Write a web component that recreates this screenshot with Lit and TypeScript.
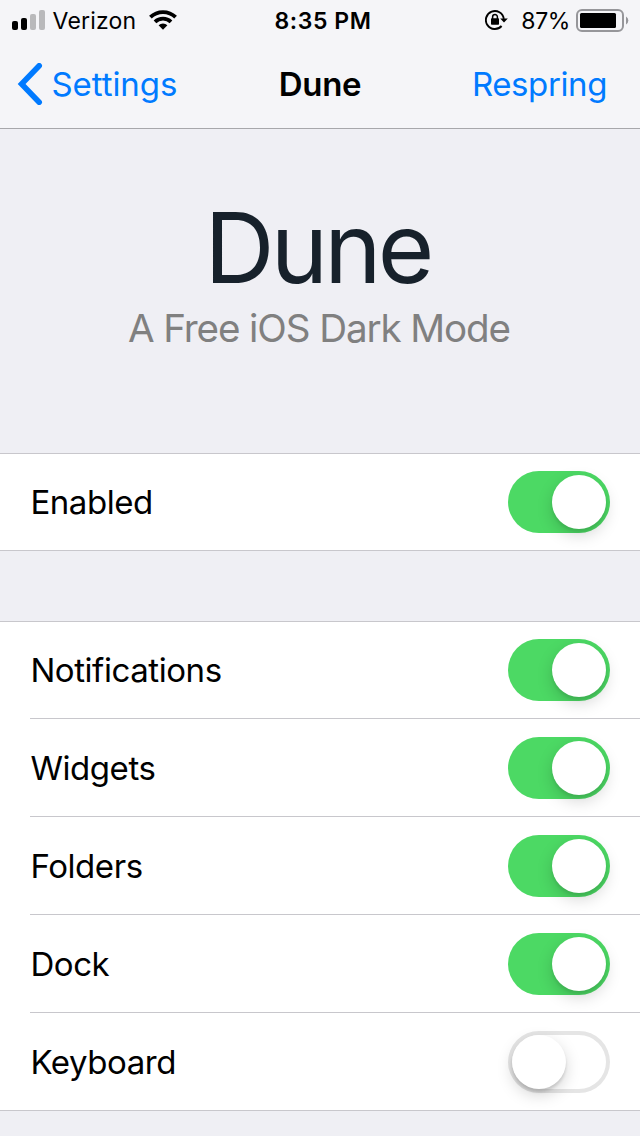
import { LitElement, html, css } from "lit";
import { customElement, property, state } from "lit/decorators.js";

interface Option {
  key: string;
  label: string;
  on: boolean;
}

@customElement("toggle-switch")
class ToggleSwitch extends LitElement {
  @property({ type: Boolean, reflect: true }) on = false;

  static styles = css`
    :host {
      display: block;
      flex: none;
    }
    .track {
      display: flex;
      align-items: center;
      box-sizing: border-box;
      width: 102px;
      height: 62px;
      padding: 0 4px;
      border-radius: 31px;
      background: #fff;
      box-shadow: inset 0 0 0 4px #e5e5e5;
    }
    .track.on {
      justify-content: flex-end;
      background: #4cd964;
      box-shadow: none;
    }
    .knob {
      width: 54px;
      height: 54px;
      border-radius: 50%;
      background: #fff;
      box-shadow: 0 6px 16px rgba(0, 0, 0, 0.17), 0 3px 3px rgba(0, 0, 0, 0.12);
    }
    .track.on .knob {
      box-shadow: 0 6px 16px rgba(0, 0, 0, 0.17), 0 3px 3px rgba(0, 0, 0, 0.07);
    }
  `;

  render() {
    return html`<div class="track ${this.on ? "on" : ""}"><div class="knob"></div></div>`;
  }
}

@customElement("status-bar")
class StatusBar extends LitElement {
  static styles = css`
    :host {
      display: grid;
      grid-template-columns: 1fr auto 1fr;
      align-items: center;
      height: 40px;
      padding: 0 11px 0 12px;
      font-size: 23px;
      line-height: 42px;
      color: #000;
    }
    .side {
      display: flex;
      align-items: center;
      height: 40px;
    }
    .right {
      justify-content: flex-end;
    }
    .carrier {
      margin-left: 7.5px;
      letter-spacing: 0.2px;
    }
    .wifi {
      margin-left: 12.5px;
    }
    .time {
      font-weight: 600;
      letter-spacing: 0.6px;
      margin-left: 5px;
    }
    .percent {
      margin: 0 6px 0 13px;
      letter-spacing: -0.4px;
    }
    svg {
      display: block;
      flex: none;
      margin-bottom: 2px;
    }
  `;

  render() {
    return html`
      <div class="side">
        <svg width="33" height="20" viewBox="0 0 33 20">
          <rect x="0" y="11" width="6" height="9" rx="2" />
          <rect x="9" y="8" width="6" height="12" rx="2" />
          <rect x="18" y="4" width="6" height="16" rx="2" fill="#b9b9bb" />
          <rect x="27" y="0" width="6" height="20" rx="2" fill="#b9b9bb" />
        </svg>
        <span class="carrier">Verizon</span>
        <svg class="wifi" width="28" height="20" viewBox="0 0 28 20">
          <g fill="none" stroke="#000" stroke-width="3.8">
            <path d="M1.4 7.2 A18 18 0 0 1 26.6 7.2" />
            <path d="M6 11.8 A11.5 11.5 0 0 1 22 11.8" />
          </g>
          <path d="M14 19.8 L9.6 15.3 A6.3 6.3 0 0 1 18.4 15.3 Z" />
        </svg>
      </div>
      <span class="time">8:35 PM</span>
      <div class="side right">
        <svg width="23" height="20" viewBox="0 0 23 20">
          <path d="M16.6 16 A9 9 0 1 1 18.8 8.8" fill="none" stroke="#000" stroke-width="1.9" />
          <path d="M15.2 8.5 H22.8 L19 12.6 Z" />
          <rect x="6" y="8.3" width="8" height="6.4" rx="0.8" />
          <path d="M7.6 9 V7 A2.4 2.4 0 0 1 12.4 7 V9" fill="none" stroke="#000" stroke-width="1.5" />
        </svg>
        <span class="percent">87%</span>
        <svg width="53" height="24" viewBox="0 -1 53 24">
          <rect x="1" y="1" width="46" height="21" rx="5" fill="none" stroke="#96969a" stroke-width="2" />
          <rect x="4" y="4" width="36" height="15" rx="1.5" />
          <path d="M50 7.5 A4.6 4.6 0 0 1 50 15.5 Z" fill="#96969a" />
        </svg>
      </div>
    `;
  }
}

@customElement("app-root")
class AppRoot extends LitElement {
  @state() private groups: Option[][] = [
    [{ key: "enabled", label: "Enabled", on: true }],
    [
      { key: "notifications", label: "Notifications", on: true },
      { key: "widgets", label: "Widgets", on: true },
      { key: "folders", label: "Folders", on: true },
      { key: "dock", label: "Dock", on: true },
      { key: "keyboard", label: "Keyboard", on: false },
    ],
  ];

  static styles = css`
    :host {
      display: flex;
      flex-direction: column;
      width: 640px;
      height: 1136px;
      overflow: hidden;
      background: #efeff4;
      font-family: Inter, "Liberation Sans", sans-serif;
      color: #000;
    }
    .header {
      flex: none;
      height: 128px;
      background: #f5f5f8;
      border-bottom: 1px solid #a7a7ab;
    }
    .nav {
      display: grid;
      grid-template-columns: 1fr auto 1fr;
      align-items: center;
      height: 88px;
      padding: 0 33px 0 17px;
      font-size: 33px;
      line-height: 88px;
    }
    .back {
      display: flex;
      align-items: center;
      color: #007aff;
    }
    .back span {
      margin-left: 8.4px;
      letter-spacing: -0.05px;
    }
    .title {
      font-weight: 600;
      letter-spacing: -0.3px;
      margin-left: 16px;
    }
    .action {
      color: #007aff;
      text-align: right;
      letter-spacing: -0.4px;
    }
    .hero {
      flex: none;
      height: 324px;
      box-sizing: border-box;
      padding-top: 59px;
      text-align: center;
    }
    .hero-title {
      padding-right: 5px;
      font-size: 97px;
      line-height: 120px;
      letter-spacing: -3.8px;
      color: #17212b;
    }
    .hero-sub {
      margin-top: -2px;
      padding-right: 2px;
      font-size: 38.6px;
      line-height: 44px;
      letter-spacing: -1.1px;
      color: #808080;
    }
    .group {
      flex: none;
      background: #fff;
      border-top: 1px solid #c8c7cc;
      border-bottom: 1px solid #c8c7cc;
      padding-left: 30px;
      margin-bottom: 70px;
    }
    .row {
      display: flex;
      align-items: center;
      justify-content: space-between;
      height: 96px;
      padding-right: 30px;
      font-size: 33px;
      line-height: 96px;
      letter-spacing: -0.43px;
    }
    .row + .row {
      padding-top: 1px;
      border-top: 1px solid #c8c7cc;
    }
    .label {
      margin-left: 0.4px;
    }
  `;

  private flip(option: Option) {
    option.on = !option.on;
    this.groups = [...this.groups];
  }

  render() {
    return html`
      <header class="header">
        <status-bar></status-bar>
        <nav class="nav">
          <div class="back">
            <svg width="26" height="42" viewBox="0 0 26 42">
              <path d="M22.2 2.8 L4.6 21 L22.2 39.2" fill="none" stroke="#007aff" stroke-width="5.6" stroke-linecap="round" />
            </svg>
            <span>Settings</span>
          </div>
          <div class="title">Dune</div>
          <div class="action">Respring</div>
        </nav>
      </header>
      <section class="hero">
        <div class="hero-title">Dune</div>
        <div class="hero-sub">A Free iOS Dark Mode</div>
      </section>
      ${this.groups.map(
        (group) => html`<section class="group">
          ${group.map(
            (o) => html`<div class="row">
              <span class="label">${o.label}</span>
              <toggle-switch ?on=${o.on} @click=${() => this.flip(o)}></toggle-switch>
            </div>`
          )}
        </section>`
      )}
    `;
  }
}
